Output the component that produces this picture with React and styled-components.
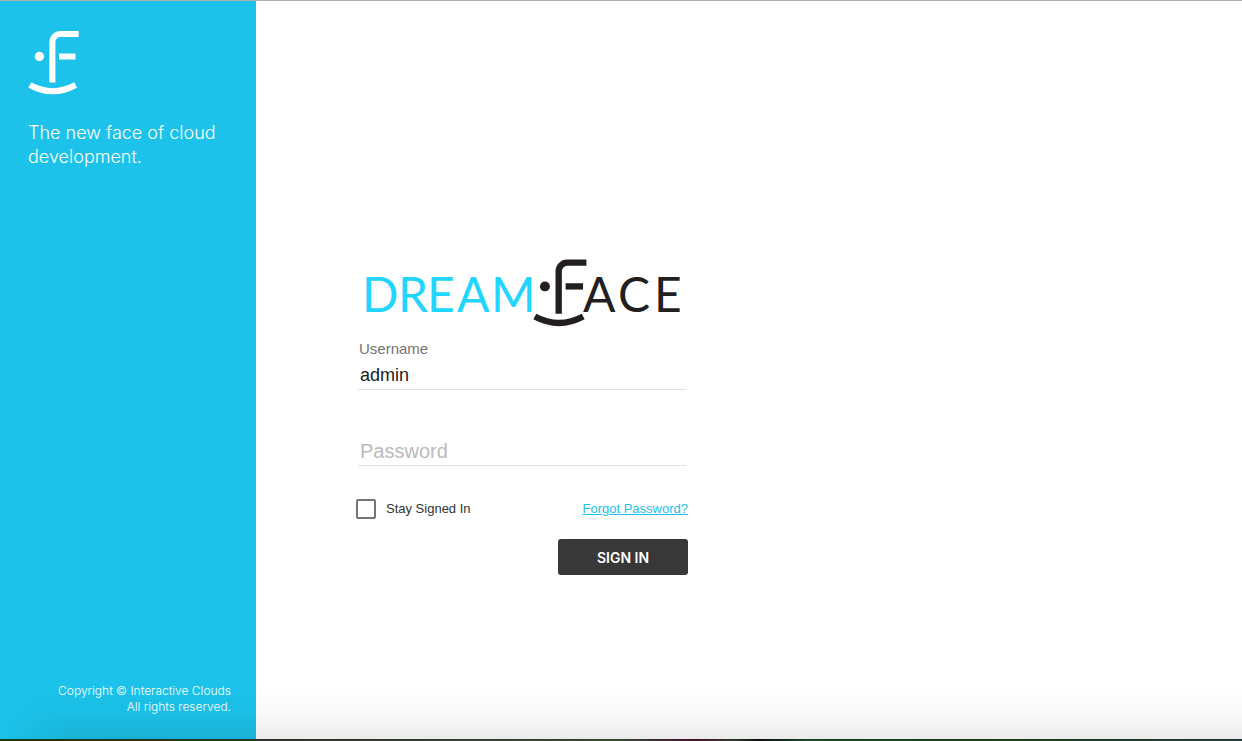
import React from "react";
import styled, { createGlobalStyle } from "styled-components";

const GlobalStyle = createGlobalStyle`
  * { box-sizing: border-box; }
  body {
    margin: 0;
    background: #fff;
    font-family: "Liberation Sans", Arial, sans-serif;
    font-size: 13px;
    line-height: 16px;
  }
`;

const Page = styled.div`
  position: relative;
  display: flex;
  flex-direction: column;
  min-height: 100vh;
  border-top: 1px solid #b0b0b0;
`;

const Columns = styled.div`
  flex: 1;
  display: flex;
`;

const Sidebar = styled.aside`
  flex: none;
  width: 256px;
  display: flex;
  flex-direction: column;
  padding: 27px 25px 24px 28px;
  background: #1cc2e9;
  color: #fff;
  font-family: Inter, "Liberation Sans", sans-serif;
  font-weight: 300;
`;

const SidebarMark = styled.svg`
  width: 52px;
  height: 68px;
`;

const Tagline = styled.p`
  margin: 25px 0 0;
  font-size: 18px;
  line-height: 24px;
`;

const Copyright = styled.p`
  margin: auto 0 0;
  font-size: 12px;
  text-align: right;
`;

const Main = styled.main`
  flex: 1;
  padding: 253px 100px 80px 102px;
`;

const Form = styled.form`
  display: flex;
  flex-direction: column;
  width: 100%;
  max-width: 330px;
`;

const Wordmark = styled.svg`
  width: 330px;
  height: 76px;
  font-family: Lato, sans-serif;
  font-size: 48px;
`;

const Field = styled.div`
  display: flex;
  flex-direction: column;
  margin: 0 2px ${(p) => (p.$last ? 32 : 44)}px 0;
`;

const FieldLabel = styled.label`
  margin-top: 10px;
  padding-left: 1px;
  font-size: 15px;
  line-height: 18px;
  color: #757575;
`;

const TextInput = styled.input`
  width: 100%;
  height: 32px;
  padding: 5px 2px 1px;
  border: 0;
  border-bottom: 1px solid #e0e0e0;
  border-radius: 0;
  outline: 0;
  background: transparent;
  color: #212121;
  font-family: inherit;
  font-size: ${(p) => (p.$large ? 20 : 18)}px;

  &::placeholder {
    color: #bbb;
    opacity: 1;
  }
`;

const Options = styled.div`
  display: flex;
  align-items: center;
  justify-content: space-between;
  height: 22px;
  margin-left: -2px;
`;

const CheckLabel = styled.label`
  display: flex;
  align-items: center;
  gap: 10px;
  color: #333;
`;

const Checkbox = styled.input`
  appearance: none;
  width: 20px;
  height: 20px;
  margin: 0;
  border: 2px solid #757575;
  border-radius: 2px;

  &:checked { background: #1cc2e9; }
`;

const ForgotLink = styled.a`
  color: #1cc2e9;
  text-decoration: underline;
`;

const SignInButton = styled.button`
  align-self: flex-end;
  width: 130px;
  height: 36px;
  margin-top: 19px;
  border: 0;
  border-radius: 3px;
  background: #383838;
  color: #fff;
  font-family: Inter, sans-serif;
  font-size: 14px;
  font-weight: 600;
`;

const BottomShade = styled.div`
  position: absolute;
  right: 0;
  bottom: 2px;
  left: 0;
  height: 50px;
  pointer-events: none;
  background: linear-gradient(to bottom, rgba(0, 0, 0, 0), rgba(0, 0, 0, 0.025) 50%, rgba(0, 0, 0, 0.08));
  mask-image: linear-gradient(to right, transparent, #000 70px);
`;

const DesktopEdge = styled.div`
  height: 2px;
  background: linear-gradient(
    to right,
    #173b10 0%, #2c3328 20%, #34482f 50%, #45102c 56%, #35372f 59%,
    #08100d 61%, #1d4426 65%, #1d3c19 82%, #263a3e 100%
  );
`;

function Face() {
  return (
    <g fill="none" stroke="currentColor" strokeWidth="6">
      <path d="M52.4 82.5V42a8 8 0 0 1 8-8H78.7" />
      <path d="M59 56.5H75.5" />
      <path d="M29.8 85Q52.7 97.4 75.6 85" />
      <circle cx="39.4" cy="56.5" r="4.7" fill="currentColor" stroke="none" />
    </g>
  );
}

export default function App() {
  return (
    <>
      <GlobalStyle />
      <Page>
        <Columns>
          <Sidebar>
            <SidebarMark viewBox="28 28 52 68" aria-hidden="true">
              <Face />
            </SidebarMark>
            <Tagline>The new face of cloud development.</Tagline>
            <Copyright>
              Copyright © Interactive Clouds
              <br />
              All rights reserved.
            </Copyright>
          </Sidebar>
          <Main>
            <Form onSubmit={(e) => e.preventDefault()}>
              <Wordmark viewBox="358 254 330 76" role="img" aria-label="DreamFace">
                <text x="362 398 427 457 491" y="312" fill="#22d5ff">DREAM</text>
                <text x="583 618 654" y="312" fill="#231f20">ACE</text>
                <g transform="translate(503.4 226.8) scale(1.055)" color="#231f20">
                  <Face />
                </g>
              </Wordmark>
              <Field>
                <FieldLabel htmlFor="username">Username</FieldLabel>
                <TextInput id="username" type="text" defaultValue="admin" />
              </Field>
              <Field $last>
                <TextInput $large type="password" placeholder="Password" aria-label="Password" />
              </Field>
              <Options>
                <CheckLabel>
                  <Checkbox type="checkbox" />
                  Stay Signed In
                </CheckLabel>
                <ForgotLink href="#forgot">Forgot Password?</ForgotLink>
              </Options>
              <SignInButton type="submit">SIGN IN</SignInButton>
            </Form>
          </Main>
        </Columns>
        <DesktopEdge />
        <BottomShade />
      </Page>
    </>
  );
}
